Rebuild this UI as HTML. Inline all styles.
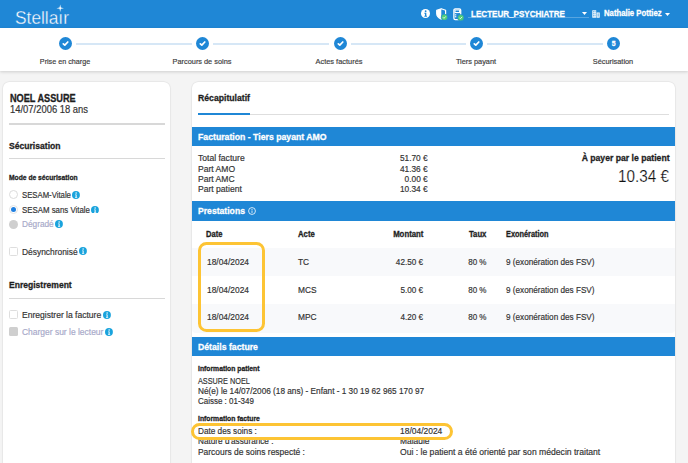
<!DOCTYPE html>
<html><head><meta charset="utf-8">
<style>
*{margin:0;padding:0;box-sizing:border-box}
html,body{width:688px;height:463px;overflow:hidden;background:#f4f4f4;font-family:"Liberation Sans",sans-serif}
.t{position:absolute;white-space:nowrap;line-height:1;-webkit-text-stroke:0.18px currentColor}
.b{-webkit-text-stroke:0.3px currentColor}
.r{position:absolute}
</style></head><body>
<div class="r" style="left:0px;top:0px;width:688.00px;height:28.00px;background:#1f87d6"></div>
<div class="t" style="left:14.60px;top:9.96px;font-size:17.7px;color:#fff;transform:scaleX(0.9802);transform-origin:left top;-webkit-text-stroke:0.35px #1f87d6;">Stellaır</div>
<svg class="r" style="left:56.2px;top:4.3px" width="8.4" height="8.4" viewBox="0 0 8 8"><path d="M4 0.4 L4.6 3.4 L7.6 4 L4.6 4.6 L4 7.6 L3.4 4.6 L0.4 4 L3.4 3.4 Z" fill="#fff"/></svg>
<svg class="r" style="left:420.8px;top:9.3px" width="9" height="9" viewBox="0 0 14 14"><circle cx="7" cy="7" r="7" fill="#fff"/><circle cx="7.2" cy="3.5" r="1.4" fill="#1f87d6"/><path d="M5.2 5.9h3.1v4.7h1v1.4H5.2v-1.4h1V7.3h-1z" fill="#1f87d6"/></svg>
<svg class="r" style="left:436px;top:8.3px" width="13" height="12" viewBox="0 0 13 12"><path d="M5.3 0.7 L9.6 2.2 V5.6 C9.6 8.2 7.9 10.1 5.3 11.1 C2.7 10.1 0.7 8.2 0.7 5.6 V2.4 Z" fill="none" stroke="#fff" stroke-width="1.2" stroke-linejoin="round"/><path d="M5.3 0.7 V11.1 C2.7 10.1 0.7 8.2 0.7 5.6 V2.4 Z" fill="#fff"/><circle cx="8.4" cy="9.3" r="3.2" fill="#50cf78" stroke="#1f87d6" stroke-width="0.7"/><path d="M7 9.3 L8 10.3 L9.8 8.4" stroke="#fff" stroke-width="0.8" fill="none"/></svg>
<svg class="r" style="left:452.5px;top:8px" width="11" height="13" viewBox="0 0 11 13"><rect x="0.9" y="0.8" width="6.8" height="10.8" rx="1.3" fill="none" stroke="#fff" stroke-width="1.3"/><rect x="1.5" y="1.5" width="5.6" height="3.6" fill="#fff"/><rect x="2.5" y="2.5" width="3.6" height="1.5" fill="#1f87d6"/><rect x="2.0" y="6.3" width="1.3" height="1.1" fill="#fff"/><rect x="2.0" y="8.2" width="1.3" height="1.1" fill="#fff"/><circle cx="7.8" cy="9.7" r="3.2" fill="#50cf78" stroke="#1f87d6" stroke-width="0.7"/><path d="M6.4 9.7 L7.4 10.7 L9.2 8.8" stroke="#fff" stroke-width="0.8" fill="none"/></svg>
<div class="t b" style="left:471.00px;top:8.91px;font-size:9.4px;font-weight:bold;color:#fff;transform:scaleX(0.8602);transform-origin:left top;-webkit-text-stroke:0.3px #fff;">LECTEUR_PSYCHIATRE</div>
<div class="r" style="left:468.4px;top:17.2px;width:120.40px;height:0.80px;background:rgba(255,255,255,0.25)"></div>
<svg class="r" style="left:582px;top:12.3px" width="5" height="3" viewBox="0 0 5 3"><path d="M0 0H5L2.5 3Z" fill="#fff"/></svg>
<svg class="r" style="left:592px;top:10px" width="8" height="8" viewBox="0 0 8 8"><path d="M0.3 0.3H4.2V7.7H0.3Z" fill="#fff"/><path d="M4.6 2.5H7.7V7.7H4.6Z" fill="#fff"/><rect x="1.2" y="1.3" width="0.9" height="1" fill="#1f87d6"/><rect x="2.6" y="1.3" width="0.9" height="1" fill="#1f87d6"/><rect x="1.2" y="3.3" width="0.9" height="1" fill="#1f87d6"/><rect x="2.6" y="3.3" width="0.9" height="1" fill="#1f87d6"/><rect x="1.2" y="5.3" width="0.9" height="1" fill="#1f87d6"/><rect x="2.6" y="5.3" width="0.9" height="1" fill="#1f87d6"/><rect x="5.5" y="3.6" width="1.3" height="1" fill="#1f87d6"/><rect x="5.5" y="5.4" width="1.3" height="1" fill="#1f87d6"/></svg>
<div class="t b" style="left:603.70px;top:9.08px;font-size:9.2px;font-weight:bold;color:#fff;transform:scaleX(0.8423);transform-origin:left top;-webkit-text-stroke:0.3px #fff;">Nathalie Pottiez</div>
<svg class="r" style="left:665px;top:12.5px" width="5" height="3" viewBox="0 0 5 3"><path d="M0 0H5L2.5 3Z" fill="#fff"/></svg>
<div class="r" style="left:0px;top:28px;width:688.00px;height:43.00px;background:#fff;box-shadow:0 1px 3px rgba(0,0,0,0.16)"></div>
<div class="r" style="left:76.1px;top:43.2px;width:116.30px;height:1.60px;background:#d6e7f6"></div>
<div class="r" style="left:213.4px;top:43.2px;width:116.10px;height:1.60px;background:#d6e7f6"></div>
<div class="r" style="left:350.5px;top:43.2px;width:115.50px;height:1.60px;background:#d6e7f6"></div>
<div class="r" style="left:487.0px;top:43.2px;width:116.20px;height:1.60px;background:#d6e7f6"></div>
<div class="r" style="left:59.10px;top:37.0px;width:13px;height:13px;border-radius:50%;background:#1f87d6"></div>
<svg class="r" style="left:59.10px;top:37.0px" width="13" height="13" viewBox="0 0 13 13"><path d="M4.3 6.8 L5.8 8.2 L8.8 5.0" stroke="#fff" stroke-width="1.7" fill="none" stroke-linecap="round" stroke-linejoin="round"/></svg>
<div class="t" style="left:-84.80px;width:300px;text-align:center;top:57.95px;font-size:7.7px;color:#3c3c3c;transform:scaleX(0.9345);transform-origin:center top;">Prise en charge</div>
<div class="r" style="left:196.40px;top:37.0px;width:13px;height:13px;border-radius:50%;background:#1f87d6"></div>
<svg class="r" style="left:196.40px;top:37.0px" width="13" height="13" viewBox="0 0 13 13"><path d="M4.3 6.8 L5.8 8.2 L8.8 5.0" stroke="#fff" stroke-width="1.7" fill="none" stroke-linecap="round" stroke-linejoin="round"/></svg>
<div class="t" style="left:52.30px;width:300px;text-align:center;top:57.95px;font-size:7.7px;color:#3c3c3c;transform:scaleX(0.9557);transform-origin:center top;">Parcours de soins</div>
<div class="r" style="left:333.50px;top:37.0px;width:13px;height:13px;border-radius:50%;background:#1f87d6"></div>
<svg class="r" style="left:333.50px;top:37.0px" width="13" height="13" viewBox="0 0 13 13"><path d="M4.3 6.8 L5.8 8.2 L8.8 5.0" stroke="#fff" stroke-width="1.7" fill="none" stroke-linecap="round" stroke-linejoin="round"/></svg>
<div class="t" style="left:188.90px;width:300px;text-align:center;top:57.95px;font-size:7.7px;color:#3c3c3c;transform:scaleX(0.9634);transform-origin:center top;">Actes facturés</div>
<div class="r" style="left:470.00px;top:37.0px;width:13px;height:13px;border-radius:50%;background:#1f87d6"></div>
<svg class="r" style="left:470.00px;top:37.0px" width="13" height="13" viewBox="0 0 13 13"><path d="M4.3 6.8 L5.8 8.2 L8.8 5.0" stroke="#fff" stroke-width="1.7" fill="none" stroke-linecap="round" stroke-linejoin="round"/></svg>
<div class="t" style="left:325.90px;width:300px;text-align:center;top:57.95px;font-size:7.7px;color:#3c3c3c;transform:scaleX(0.9576);transform-origin:center top;">Tiers payant</div>
<div class="r" style="left:607.20px;top:37.0px;width:13px;height:13px;border-radius:50%;background:#1f87d6"></div>
<div class="t b" style="left:463.70px;width:300px;text-align:center;top:41.32px;font-size:6.8px;font-weight:bold;color:#fff;">5</div>
<div class="t" style="left:462.90px;width:300px;text-align:center;top:57.95px;font-size:7.7px;color:#3c3c3c;transform:scaleX(0.9534);transform-origin:center top;">Sécurisation</div>
<div class="r" style="left:3.1px;top:81.7px;width:167.10px;height:398.30px;background:#fff;border-radius:6px;box-shadow:0 0 0 0.5px rgba(0,0,0,0.06),0 0 2px rgba(0,0,0,0.08)"></div>
<div class="t b" style="left:9.90px;top:93.50px;font-size:10.0px;font-weight:bold;color:#1e1e1e;transform:scaleX(0.9166);transform-origin:left top;">NOEL ASSURE</div>
<div class="t" style="left:9.90px;top:104.90px;font-size:10.0px;color:#333;transform:scaleX(0.9414);transform-origin:left top;">14/07/2006 18 ans</div>
<div class="r" style="left:9.2px;top:123.1px;width:155.40px;height:1.60px;background:#d8d8d8"></div>
<div class="t b" style="left:9.40px;top:140.95px;font-size:9.7px;font-weight:bold;color:#1e1e1e;transform:scaleX(0.8863);transform-origin:left top;">Sécurisation</div>
<div class="r" style="left:9.2px;top:157.8px;width:155.40px;height:1.60px;background:#d8d8d8"></div>
<div class="t b" style="left:9.40px;top:173.53px;font-size:7.5px;font-weight:bold;color:#1e1e1e;transform:scaleX(0.8946);transform-origin:left top;">Mode de sécurisation</div>
<div class="r" style="left:9.1px;top:189.9px;width:9px;height:9px;border-radius:50%;border:0.8px solid #dcdcdc;background:#fff"></div>
<div class="r" style="left:9.1px;top:204.7px;width:9px;height:9px;border-radius:50%;border:0.8px solid #e4e4e4;background:#fff"></div>
<div class="r" style="left:11.1px;top:206.7px;width:5px;height:5px;border-radius:50%;background:#1f7fe0"></div>
<div class="r" style="left:9.1px;top:219.6px;width:9px;height:9px;border-radius:50%;background:#cfcfcf"></div>
<div class="t" style="left:22.10px;top:190.70px;font-size:8.7px;color:#333;transform:scaleX(0.8915);transform-origin:left top;">SESAM-Vitale</div>
<svg class="r" style="left:72.35px;top:190.75px" width="7.9" height="7.9" viewBox="0 0 14 14"><circle cx="7" cy="7" r="7" fill="#19a3dd"/><circle cx="7.3" cy="3.7" r="1.3" fill="#fff"/><path d="M5.4 6h2.8v4.6h1v1.3H5.4v-1.3h1V7.3h-1z" fill="#fff"/></svg>
<div class="t" style="left:22.10px;top:205.50px;font-size:8.7px;color:#333;transform:scaleX(0.9033);transform-origin:left top;">SESAM sans Vitale</div>
<svg class="r" style="left:91.25px;top:205.55px" width="7.9" height="7.9" viewBox="0 0 14 14"><circle cx="7" cy="7" r="7" fill="#19a3dd"/><circle cx="7.3" cy="3.7" r="1.3" fill="#fff"/><path d="M5.4 6h2.8v4.6h1v1.3H5.4v-1.3h1V7.3h-1z" fill="#fff"/></svg>
<div class="t" style="left:22.10px;top:219.91px;font-size:8.7px;color:#a7a9c9;transform:scaleX(0.9499);transform-origin:left top;">Dégradé</div>
<svg class="r" style="left:54.95px;top:220.45px" width="7.9" height="7.9" viewBox="0 0 14 14"><circle cx="7" cy="7" r="7" fill="#19a3dd"/><circle cx="7.3" cy="3.7" r="1.3" fill="#fff"/><path d="M5.4 6h2.8v4.6h1v1.3H5.4v-1.3h1V7.3h-1z" fill="#fff"/></svg>
<div class="r" style="left:9px;top:246.5px;width:9px;height:9px;border-radius:1.5px;border:0.8px solid #dedede;background:#fff"></div>
<div class="t" style="left:22.10px;top:247.60px;font-size:8.7px;color:#333;transform:scaleX(0.9679);transform-origin:left top;">Désynchronisé</div>
<svg class="r" style="left:79.15px;top:247.35px" width="7.9" height="7.9" viewBox="0 0 14 14"><circle cx="7" cy="7" r="7" fill="#19a3dd"/><circle cx="7.3" cy="3.7" r="1.3" fill="#fff"/><path d="M5.4 6h2.8v4.6h1v1.3H5.4v-1.3h1V7.3h-1z" fill="#fff"/></svg>
<div class="t b" style="left:9.40px;top:280.25px;font-size:9.7px;font-weight:bold;color:#1e1e1e;transform:scaleX(0.8826);transform-origin:left top;">Enregistrement</div>
<div class="r" style="left:9.2px;top:297.8px;width:155.40px;height:1.60px;background:#d8d8d8"></div>
<div class="r" style="left:9.1px;top:310.4px;width:9px;height:9px;border-radius:1.5px;border:0.8px solid #dedede;background:#fff"></div>
<div class="t" style="left:22.30px;top:311.31px;font-size:8.7px;color:#333;transform:scaleX(0.9820);transform-origin:left top;">Enregistrer la facture</div>
<svg class="r" style="left:102.85px;top:311.05px" width="7.9" height="7.9" viewBox="0 0 14 14"><circle cx="7" cy="7" r="7" fill="#19a3dd"/><circle cx="7.3" cy="3.7" r="1.3" fill="#fff"/><path d="M5.4 6h2.8v4.6h1v1.3H5.4v-1.3h1V7.3h-1z" fill="#fff"/></svg>
<div class="r" style="left:9.1px;top:327.3px;width:9px;height:9px;border-radius:1.5px;background:#cfcfcf"></div>
<div class="t" style="left:22.30px;top:328.31px;font-size:8.7px;color:#a7a9c9;transform:scaleX(0.9743);transform-origin:left top;">Charger sur le lecteur</div>
<svg class="r" style="left:105.15px;top:328.05px" width="7.9" height="7.9" viewBox="0 0 14 14"><circle cx="7" cy="7" r="7" fill="#19a3dd"/><circle cx="7.3" cy="3.7" r="1.3" fill="#fff"/><path d="M5.4 6h2.8v4.6h1v1.3H5.4v-1.3h1V7.3h-1z" fill="#fff"/></svg>
<div class="r" style="left:191.8px;top:81.7px;width:483.20px;height:398.30px;background:#fff;border-radius:6px;box-shadow:0 0 0 0.5px rgba(0,0,0,0.06),0 0 2px rgba(0,0,0,0.08)"></div>
<div class="t b" style="left:198.00px;top:92.85px;font-size:9.7px;font-weight:bold;color:#1e1e1e;transform:scaleX(0.8933);transform-origin:left top;">Récapitulatif</div>
<div class="r" style="left:198px;top:114.2px;width:471.00px;height:1.00px;background:#dedede"></div>
<div class="r" style="left:198px;top:113.2px;width:52.00px;height:2.00px;background:#1f87d6"></div>
<div class="r" style="left:191.8px;top:127.2px;width:483.20px;height:18.60px;background:#1f87d6"></div>
<div class="t b" style="left:198.00px;top:131.75px;font-size:9.7px;font-weight:bold;color:#fff;transform:scaleX(0.8984);transform-origin:left top;">Facturation - Tiers payant AMO</div>
<div class="t" style="left:198.00px;top:153.74px;font-size:8.9px;color:#333;transform:scaleX(0.9650);transform-origin:left top;">Total facture</div>
<div class="t" style="right:260.70px;top:153.74px;font-size:8.9px;color:#333;transform:scaleX(0.9350);transform-origin:right top;">51.70 €</div>
<div class="t" style="left:198.00px;top:164.84px;font-size:8.9px;color:#333;transform:scaleX(0.9650);transform-origin:left top;">Part AMO</div>
<div class="t" style="right:260.70px;top:164.84px;font-size:8.9px;color:#333;transform:scaleX(0.9350);transform-origin:right top;">41.36 €</div>
<div class="t" style="left:198.00px;top:174.94px;font-size:8.9px;color:#333;transform:scaleX(0.9650);transform-origin:left top;">Part AMC</div>
<div class="t" style="right:260.70px;top:174.94px;font-size:8.9px;color:#333;transform:scaleX(0.9350);transform-origin:right top;">0.00 €</div>
<div class="t" style="left:198.00px;top:185.13px;font-size:8.9px;color:#333;transform:scaleX(0.9650);transform-origin:left top;">Part patient</div>
<div class="t" style="right:260.70px;top:185.13px;font-size:8.9px;color:#333;transform:scaleX(0.9350);transform-origin:right top;">10.34 €</div>
<div class="t b" style="right:18.80px;top:153.34px;font-size:9.6px;font-weight:bold;color:#1e1e1e;transform:scaleX(0.9013);transform-origin:right top;">À payer par le patient</div>
<div class="t" style="right:18.80px;top:168.13px;font-size:16.2px;color:#111;transform:scaleX(0.9435);transform-origin:right top;-webkit-text-stroke:0.2px #fff;">10.34 €</div>
<div class="r" style="left:191.8px;top:200.6px;width:483.20px;height:20.00px;background:#1f87d6"></div>
<div class="t b" style="left:198.00px;top:205.85px;font-size:9.7px;font-weight:bold;color:#fff;transform:scaleX(0.8896);transform-origin:left top;">Prestations</div>
<svg class="r" style="left:248.2px;top:207.3px" width="8" height="8" viewBox="0 0 14 14"><circle cx="7" cy="7" r="6" fill="none" stroke="#fff" stroke-width="1.4"/><circle cx="7" cy="4.3" r="0.9" fill="#fff"/><rect x="6.3" y="6" width="1.4" height="4.4" fill="#fff"/></svg>
<div class="t b" style="left:206.30px;top:230.39px;font-size:8.6px;font-weight:bold;color:#1e1e1e;transform:scaleX(0.8798);transform-origin:left top;">Date</div>
<div class="t b" style="left:298.30px;top:230.39px;font-size:8.6px;font-weight:bold;color:#1e1e1e;transform:scaleX(0.9013);transform-origin:left top;">Acte</div>
<div class="t b" style="right:264.60px;top:230.39px;font-size:8.6px;font-weight:bold;color:#1e1e1e;transform:scaleX(0.9062);transform-origin:right top;">Montant</div>
<div class="t b" style="right:201.70px;top:230.39px;font-size:8.6px;font-weight:bold;color:#1e1e1e;transform:scaleX(0.9005);transform-origin:right top;">Taux</div>
<div class="t b" style="left:506.00px;top:230.39px;font-size:8.6px;font-weight:bold;color:#1e1e1e;transform:scaleX(0.8572);transform-origin:left top;">Exonération</div>
<div class="r" style="left:191.8px;top:248px;width:483.20px;height:27.70px;background:#f8f9fb"></div>
<div class="r" style="left:191.8px;top:303.8px;width:483.20px;height:29.00px;background:#f8f9fb;border-radius:0 0 4px 4px"></div>
<div class="t" style="left:206.80px;top:258.15px;font-size:9.0px;color:#333;transform:scaleX(0.9324);transform-origin:left top;">18/04/2024</div>
<div class="t" style="left:298.30px;top:258.15px;font-size:9.0px;color:#333;transform:scaleX(0.9300);transform-origin:left top;">TC</div>
<div class="t" style="right:264.60px;top:258.15px;font-size:9.0px;color:#333;transform:scaleX(0.9050);transform-origin:right top;">42.50 €</div>
<div class="t" style="right:201.70px;top:258.15px;font-size:9.0px;color:#333;transform:scaleX(0.8921);transform-origin:right top;">80 %</div>
<div class="t" style="left:506.00px;top:258.15px;font-size:9.0px;color:#333;transform:scaleX(0.9072);transform-origin:left top;">9 (exonération des FSV)</div>
<div class="t" style="left:206.80px;top:285.75px;font-size:9.0px;color:#333;transform:scaleX(0.9324);transform-origin:left top;">18/04/2024</div>
<div class="t" style="left:298.30px;top:285.75px;font-size:9.0px;color:#333;transform:scaleX(0.9300);transform-origin:left top;">MCS</div>
<div class="t" style="right:264.60px;top:285.75px;font-size:9.0px;color:#333;transform:scaleX(0.9050);transform-origin:right top;">5.00 €</div>
<div class="t" style="right:201.70px;top:285.75px;font-size:9.0px;color:#333;transform:scaleX(0.8921);transform-origin:right top;">80 %</div>
<div class="t" style="left:506.00px;top:285.75px;font-size:9.0px;color:#333;transform:scaleX(0.9072);transform-origin:left top;">9 (exonération des FSV)</div>
<div class="t" style="left:206.80px;top:313.15px;font-size:9.0px;color:#333;transform:scaleX(0.9324);transform-origin:left top;">18/04/2024</div>
<div class="t" style="left:298.30px;top:313.15px;font-size:9.0px;color:#333;transform:scaleX(0.9300);transform-origin:left top;">MPC</div>
<div class="t" style="right:264.60px;top:313.15px;font-size:9.0px;color:#333;transform:scaleX(0.9050);transform-origin:right top;">4.20 €</div>
<div class="t" style="right:201.70px;top:313.15px;font-size:9.0px;color:#333;transform:scaleX(0.8921);transform-origin:right top;">80 %</div>
<div class="t" style="left:506.00px;top:313.15px;font-size:9.0px;color:#333;transform:scaleX(0.9072);transform-origin:left top;">9 (exonération des FSV)</div>
<div class="r" style="left:198.1px;top:242.4px;width:67px;height:89.8px;border:3px solid #fdc434;border-radius:8.5px"></div>
<div class="r" style="left:191.8px;top:337.2px;width:483.20px;height:19.10px;background:#1f87d6"></div>
<div class="t b" style="left:198.00px;top:342.06px;font-size:9.7px;font-weight:bold;color:#fff;transform:scaleX(0.8975);transform-origin:left top;">Détails facture</div>
<div class="t b" style="left:198.00px;top:365.02px;font-size:7.5px;font-weight:bold;color:#1e1e1e;transform:scaleX(0.9055);transform-origin:left top;">Information patient</div>
<div class="t" style="left:198.00px;top:377.04px;font-size:8.9px;color:#333;transform:scaleX(0.8214);transform-origin:left top;">ASSURE NOEL</div>
<div class="t" style="left:198.00px;top:386.63px;font-size:8.9px;color:#333;transform:scaleX(0.9279);transform-origin:left top;">Né(e) le 14/07/2006 (18 ans) - Enfant - 1 30 19 62 965 170 97</div>
<div class="t" style="left:198.00px;top:397.04px;font-size:8.9px;color:#333;transform:scaleX(0.8984);transform-origin:left top;">Caisse : 01-349</div>
<div class="t b" style="left:198.00px;top:414.73px;font-size:7.5px;font-weight:bold;color:#1e1e1e;transform:scaleX(0.9058);transform-origin:left top;">Information facture</div>
<div class="t" style="left:198.00px;top:427.13px;font-size:8.9px;color:#333;transform:scaleX(0.9245);transform-origin:left top;">Date des soins :</div>
<div class="t" style="left:399.90px;top:427.13px;font-size:8.9px;color:#333;transform:scaleX(0.9519);transform-origin:left top;">18/04/2024</div>
<div class="t" style="left:198.00px;top:437.13px;font-size:8.9px;color:#333;transform:scaleX(0.9250);transform-origin:left top;">Nature d'assurance :</div>
<div class="t" style="left:399.90px;top:437.13px;font-size:8.9px;color:#333;transform:scaleX(0.9500);transform-origin:left top;">Maladie</div>
<div class="t" style="left:198.00px;top:447.54px;font-size:8.9px;color:#333;transform:scaleX(0.9500);transform-origin:left top;">Parcours de soins respecté :</div>
<div class="t" style="left:399.90px;top:447.54px;font-size:8.9px;color:#333;transform:scaleX(0.9687);transform-origin:left top;">Oui : le patient a été orienté par son médecin traitant</div>
<div class="r" style="left:191.3px;top:422.8px;width:262px;height:17.3px;border:3px solid #fdc434;border-radius:9px"></div>
</body></html>
